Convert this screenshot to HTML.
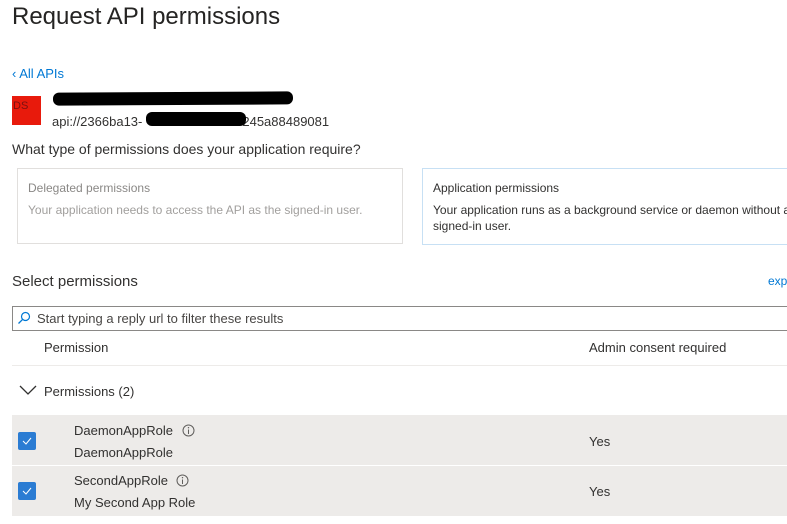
<!DOCTYPE html>
<html><head><style>
body{margin:0;width:787px;height:524px;overflow:hidden;background:#fff;font-family:"Liberation Sans",sans-serif;color:#323130;position:relative}
.a{position:absolute;white-space:nowrap}
</style></head><body>
<div class="a" style="left:12px;top:3px;font-size:24px;color:#252423">Request API permissions</div>
<div class="a" style="left:12px;top:66px;font-size:13px;color:#0078d4">&#8249; All APIs</div>
<div class="a" style="left:12px;top:96px;width:29px;height:29px;background:#e81a0c;color:#7a1010;font-size:11px;line-height:20px;padding-left:1px;box-sizing:border-box">DS</div>
<div class="a" style="left:53px;top:92px;width:240px;height:13px;background:#000;border-radius:6px;transform:rotate(-0.3deg)"></div>
<div class="a" style="left:52px;top:114px;font-size:13px">api://2366ba13-<span style="display:inline-block;width:100px"></span>245a88489081</div>
<div class="a" style="left:146px;top:112px;width:100px;height:14px;background:#000;border-radius:6px"></div>
<div class="a" style="left:12px;top:141px;font-size:14px">What type of permissions does your application require?</div>
<div class="a" style="left:17px;top:168px;width:386px;height:76px;border:1px solid #e1dfdd;box-sizing:border-box"></div>
<div class="a" style="left:28px;top:181px;font-size:12px;color:#8a8886">Delegated permissions</div>
<div class="a" style="left:28px;top:203px;font-size:12px;color:#a19f9d">Your application needs to access the API as the signed-in user.</div>
<div class="a" style="left:422px;top:168px;width:380px;height:77px;border:1px solid #c7e0f4;box-sizing:border-box"></div>
<div class="a" style="left:433px;top:181px;font-size:12px">Application permissions</div>
<div class="a" style="left:433px;top:202px;font-size:12px;line-height:16px">Your application runs as a background service or daemon without a<br>signed-in user.</div>
<div class="a" style="left:12px;top:273px;font-size:15px">Select permissions</div>
<div class="a" style="left:768px;top:274px;font-size:12px;color:#0078d4">exp</div>
<div class="a" style="left:12px;top:306px;width:800px;height:25px;border:1px solid #8a8886;box-sizing:border-box"></div>
<svg class="a" style="left:17px;top:311px" width="14" height="14" viewBox="0 0 14 14"><circle cx="8.5" cy="5.5" r="4" fill="none" stroke="#0078d4" stroke-width="1.2"/><line x1="5.6" y1="8.4" x2="1.5" y2="12.5" stroke="#0078d4" stroke-width="1.3"/></svg>
<div class="a" style="left:37px;top:311px;font-size:13px;color:#484644">Start typing a reply url to filter these results</div>
<div class="a" style="left:44px;top:340px;font-size:13px">Permission</div>
<div class="a" style="left:589px;top:340px;font-size:13px">Admin consent required</div>
<div class="a" style="left:12px;top:365px;width:775px;height:1px;background:#edebe9"></div>
<svg class="a" style="left:19px;top:385px" width="18" height="10" viewBox="0 0 18 10"><path d="M1 1 L9 9 L17 1" fill="none" stroke="#323130" stroke-width="1.3"/></svg>
<div class="a" style="left:44px;top:384px;font-size:13px">Permissions (2)</div>
<div class="a" style="left:12px;top:415px;width:775px;height:50px;background:#edebe9"></div>
<div class="a" style="left:12px;top:466px;width:775px;height:50px;background:#edebe9"></div>
<div class="a" style="left:18px;top:432px;width:18px;height:18px;background:#2b7cd3;border-radius:2px"></div>
<div class="a" style="left:18px;top:482px;width:18px;height:18px;background:#2b7cd3;border-radius:2px"></div>
<svg class="a" style="left:18px;top:432px" width="18" height="18"><path d="M5 9 L8 12 L13 6" fill="none" stroke="#fff" stroke-width="1"/></svg>
<svg class="a" style="left:18px;top:482px" width="18" height="18"><path d="M5 9 L8 12 L13 6" fill="none" stroke="#fff" stroke-width="1"/></svg>
<div class="a" style="left:74px;top:423px;font-size:13px">DaemonAppRole</div>
<svg class="a" style="left:182px;top:424px" width="13" height="13"><circle cx="6.5" cy="6.5" r="5.5" fill="none" stroke="#605e5c"/><line x1="6.5" y1="5.5" x2="6.5" y2="10" stroke="#605e5c"/><circle cx="6.5" cy="3.7" r=".7" fill="#605e5c"/></svg>
<div class="a" style="left:74px;top:445px;font-size:13px">DaemonAppRole</div>
<div class="a" style="left:589px;top:434px;font-size:13px">Yes</div>
<div class="a" style="left:74px;top:473px;font-size:13px">SecondAppRole</div>
<svg class="a" style="left:176px;top:474px" width="13" height="13"><circle cx="6.5" cy="6.5" r="5.5" fill="none" stroke="#605e5c"/><line x1="6.5" y1="5.5" x2="6.5" y2="10" stroke="#605e5c"/><circle cx="6.5" cy="3.7" r=".7" fill="#605e5c"/></svg>
<div class="a" style="left:74px;top:495px;font-size:13px">My Second App Role</div>
<div class="a" style="left:589px;top:484px;font-size:13px">Yes</div>
</body></html>
